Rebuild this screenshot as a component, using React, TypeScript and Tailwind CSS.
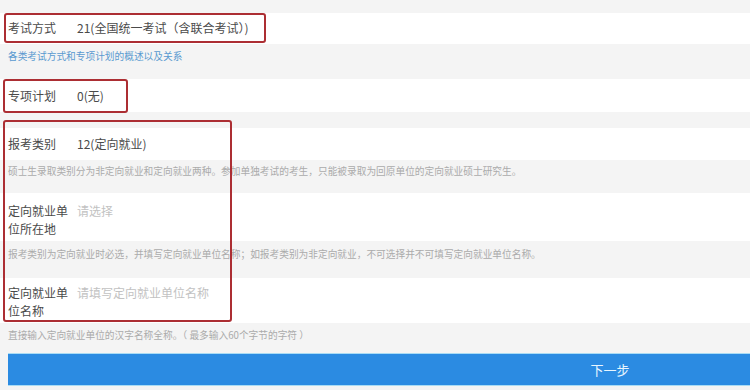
import React from 'react';

const font = { fontFamily: '"Noto Sans CJK SC", "Noto Sans", sans-serif' };

interface FieldRowProps {
  label: string;
  value: string;
  placeholder?: boolean;
  className?: string;
}

const FieldRow: React.FC<FieldRowProps> = ({ label, value, placeholder, className }) => (
  <div className={`bg-white flex items-start pl-2 ${className ?? ''}`}>
    <div className="w-[69px] shrink-0 text-[12px] leading-[18px] text-[#4a4a4a]">{label}</div>
    <div className={`text-[12px] leading-[18px] ${placeholder ? 'text-[#c2c2c2]' : 'text-[#4a4a4a]'}`}>{value}</div>
  </div>
);

const Hint: React.FC<{ children: React.ReactNode; className?: string; blue?: boolean }> = ({ children, className, blue }) => (
  <div className={`pl-2 text-[9.7px] leading-[14px] ${blue ? 'text-[#5a9ad0]' : 'text-[#ababab]'} ${className ?? ''}`}>{children}</div>
);

export default function App() {
  return (
    <div className="relative w-[750px] h-[390px] overflow-hidden bg-[#f4f4f4]" style={font}>
      <div className="flex flex-col">
        <div className="h-[13px]" />
        <FieldRow label="考试方式" value="21(全国统一考试（含联合考试）)" className="h-[31px] pt-[6px]" />
        <Hint blue className="h-[35px] pt-[5px]">各类考试方式和专项计划的概述以及关系</Hint>
        <FieldRow label="专项计划" value="0(无)" className="h-[33px] pt-[8px]" />
        <div className="h-[16px]" />
        <FieldRow label="报考类别" value="12(定向就业)" className="h-[32px] pt-[7px]" />
        <Hint className="h-[33px] pt-[4px]">硕士生录取类别分为非定向就业和定向就业两种。参加单独考试的考生，只能被录取为回原单位的定向就业硕士研究生。</Hint>
        <FieldRow label="定向就业单位所在地" value="请选择" placeholder className="h-[48px] pt-[9px]" />
        <Hint className="h-[37px] pt-[6px]">报考类别为定向就业时必选，并填写定向就业单位名称；如报考类别为非定向就业，不可选择并不可填写定向就业单位名称。</Hint>
        <FieldRow label="定向就业单位名称" value="请填写定向就业单位名称" placeholder className="h-[45px] pt-[6px]" />
        <Hint className="h-[30px] pt-[5px]">直接输入定向就业单位的汉字名称全称。（ 最多输入60个字节的字符 ）</Hint>
        <div className="ml-2 w-[1204px] h-[33px] bg-[#2b8be2] border-y border-[#a9dcf5] flex items-center justify-center text-[13px] text-[#e8f6ff]">
          下一步
        </div>
      </div>

      {/* annotation boxes */}
      <div className="absolute left-[4px] top-[13px] w-[262px] h-[30px] border-2 border-[#ac2e33] rounded-[3px]" />
      <div className="absolute left-[3px] top-[79px] w-[125px] h-[34px] border-2 border-[#ac2e33] rounded-[3px]" />
      <div className="absolute left-[3px] top-[120px] w-[229px] h-[202px] border-2 border-[#ac2e33] rounded-[3px]" />
    </div>
  );
}
